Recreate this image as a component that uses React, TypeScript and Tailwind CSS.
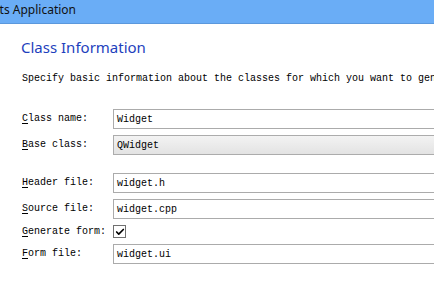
import { Check } from 'lucide-react';

const mono = "font-['Liberation_Mono','DejaVu_Sans_Mono',monospace]";

function Label({ mnemonic, rest }: { mnemonic: string; rest: string }) {
  return (
    <span className="w-[91px] shrink-0 text-[10px] leading-none text-black">
      <span className="underline underline-offset-2">{mnemonic}</span>
      {rest}
    </span>
  );
}

function TextField({ value, combo }: { value: string; combo?: boolean }) {
  return (
    <div
      className={
        combo
          ? 'h-[20px] w-[360px] shrink-0 border border-[#acacac] bg-gradient-to-b from-[#f3f3f3] to-[#e3e3e3] pl-[3px] flex items-center text-[10px] text-black'
          : 'h-[20px] w-[360px] shrink-0 border border-[#ababab] bg-white pl-[3px] flex items-center text-[10px] text-black'
      }
    >
      {value}
    </div>
  );
}

function Row({ mnemonic, rest, value, combo }: { mnemonic: string; rest: string; value: string; combo?: boolean }) {
  return (
    <div className="flex items-center h-[20px]">
      <Label mnemonic={mnemonic} rest={rest} />
      <TextField value={value} combo={combo} />
    </div>
  );
}

export default function App() {
  return (
    <div className="w-[434px] h-[284px] overflow-hidden bg-white whitespace-nowrap">
      <div className="h-[24px] bg-[#6aadf6] border-b border-[#5b98dc] overflow-hidden">
        <div className="-ml-[53px] pt-[1px] text-[12px] leading-[18px] text-[#111] font-['Noto_Sans',sans-serif]">
          Qt Widgets Application
        </div>
      </div>

      <div className={`pl-[22px] ${mono}`}>
        <h1 className="pt-[12px] -ml-[1px] text-[15px] leading-[22px] text-[#1e3fbd] font-['Noto_Sans',sans-serif]">
          Class Information
        </h1>
        <p className="mt-[15px] text-[10px] leading-[12px] text-black">
          Specify basic information about the classes for which you want to generate skeleton source code files.
        </p>

        <div className="mt-[24px] flex flex-col gap-[6px]">
          <Row mnemonic="C" rest="lass name:" value="Widget" />
          <Row mnemonic="B" rest="ase class:" value="QWidget" combo />
          <div className="h-[6px]" />
          <Row mnemonic="H" rest="eader file:" value="widget.h" />
          <Row mnemonic="S" rest="ource file:" value="widget.cpp" />
          <div className="flex items-center h-[13px]">
            <Label mnemonic="G" rest="enerate form:" />
            <div className="w-[13px] h-[13px] border border-[#707070] bg-white flex items-center justify-center">
              <Check className="w-[10px] h-[10px] text-black" strokeWidth={4} />
            </div>
          </div>
          <Row mnemonic="F" rest="orm file:" value="widget.ui" />
        </div>
      </div>
    </div>
  );
}
